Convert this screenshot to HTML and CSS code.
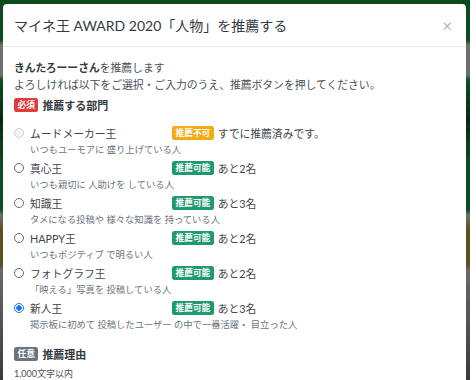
FILE: index.html
```html
<!DOCTYPE html>
<html lang="ja">
<head>
    <meta charset="UTF-8">
    <meta name="viewport" content="width=device-width, initial-scale=1.0">
    <title>マイネ王 AWARD 2020</title>
    <link rel="stylesheet" href="styles.css">
</head>
<body>

<div class="backdrop">
    <!-- モーダル -->
    <div class="modal">
        <div class="modal-header">
            <h5 class="modal-title">マイネ王 AWARD 2020「人物」を推薦する</h5>
            <span class="close">&times;</span>
        </div>

        <div class="modal-body">
            <p class="intro"><strong>きんたろーーさん</strong>を推薦します<br>よろしければ以下をご選択・ご入力のうえ、推薦ボタンを押してください。</p>

            <div class="section-title"><span class="badge badge-red">必須</span>推薦する部門</div>

            <div class="options">
                <div class="option disabled">
                    <label class="option-label"><input type="radio" name="bumon" disabled>ムードメーカー王</label>
                    <div class="option-status"><span class="badge badge-yellow">推薦不可</span>すでに推薦済みです。</div>
                    <div class="option-desc">いつもユーモアに 盛り上げている人</div>
                </div>
                <div class="option">
                    <label class="option-label"><input type="radio" name="bumon">真心王</label>
                    <div class="option-status"><span class="badge badge-green">推薦可能</span>あと2名</div>
                    <div class="option-desc">いつも親切に 人助けを している人</div>
                </div>
                <div class="option">
                    <label class="option-label"><input type="radio" name="bumon">知識王</label>
                    <div class="option-status"><span class="badge badge-green">推薦可能</span>あと3名</div>
                    <div class="option-desc">タメになる投稿や 様々な知識を 持っている人</div>
                </div>
                <div class="option">
                    <label class="option-label"><input type="radio" name="bumon">HAPPY王</label>
                    <div class="option-status"><span class="badge badge-green">推薦可能</span>あと2名</div>
                    <div class="option-desc">いつもポジティブ で明るい人</div>
                </div>
                <div class="option">
                    <label class="option-label"><input type="radio" name="bumon">フォトグラフ王</label>
                    <div class="option-status"><span class="badge badge-green">推薦可能</span>あと2名</div>
                    <div class="option-desc">「映える」写真を 投稿している人</div>
                </div>
                <div class="option">
                    <label class="option-label"><input type="radio" name="bumon" checked>新人王</label>
                    <div class="option-status"><span class="badge badge-green">推薦可能</span>あと3名</div>
                    <div class="option-desc">掲示板に初めて 投稿したユーザー の中で一番活躍・ 目立った人</div>
                </div>
            </div>

            <div class="section-title"><span class="badge badge-gray">任意</span>推薦理由</div>
            <div class="note">1,000文字以内</div>
        </div>
    </div>
</div>

</body>
</html>
```

FILE: styles.css
```css
body {
    margin: 0;
    background: #ffffff;
    font-family: "Lato", "Noto Sans CJK JP", sans-serif;
    color: #495057;
    overflow: hidden;
}
.backdrop {
    width: 470px;
    height: 380px;
    padding: 4px 4px 0 3px;
    box-sizing: border-box;
    background: linear-gradient(#0b4a1c 0, #0b4a1c 40px, #6e6e6e 45px, #6e6e6e 75px, #0d4d1f 80px, #0a2a12 120px, #0d4d1f 165px, #0d4d1f 210px, #707070 215px, #5a5020 230px, #5a5020 265px, #6a6a6a 270px, #3a3a3a 380px);
}
.modal {
    background: #fff;
    height: 100%;
    border-radius: 4px 4px 0 0;
    overflow: hidden;
}
.modal-header {
    display: flex;
    justify-content: space-between;
    align-items: center;
    padding: 12px 12px 11px 11px;
    border-bottom: 1px solid #e6e9ec;
}
.modal-title {
    margin: 0;
    font-size: 14px;
    font-weight: normal;
    line-height: 19px;
    color: #343a40;
}
.close {
    font-size: 17px;
    line-height: 19px;
    color: #b5b5b5;
    margin-right: 2px;
}
.modal-body {
    padding: 12px 11px;
    font-size: 10.8px;
}
.intro {
    margin: 0 0 4px;
    line-height: 17px;
    color: #495057;
}
.intro strong {
    color: #343a40;
}
.section-title {
    display: flex;
    align-items: center;
    height: 16px;
    font-weight: bold;
    font-size: 11px;
    color: #343a40;
}
.badge {
    display: inline-block;
    height: 14px;
    line-height: 14px;
    padding: 0 3.5px;
    border-radius: 2.5px;
    font-size: 8.7px;
    font-weight: bold;
    color: #fff;
    margin-right: 4px;
}
.badge-red { background: #e03a3a; }
.badge-yellow { background: #f2ab12; }
.badge-green { background: #1e9a70; }
.badge-gray { background: #6c757d; }
.options {
    margin: 12px 0 15px;
}
.option {
    display: grid;
    grid-template-columns: 158px 1fr;
    margin-bottom: 4px;
}
.option-label {
    display: flex;
    align-items: center;
    height: 16px;
    color: #3f464d;
}
.option-label input {
    appearance: none;
    width: 10px;
    height: 10px;
    margin: 0 6px 0 0;
    border: 1px solid #6b6b6b;
    border-radius: 50%;
    box-sizing: border-box;
    background: #fff;
}
.option-label input:checked {
    border-color: #1a73e8;
    background: radial-gradient(circle, #1a73e8 0, #1a73e8 2.5px, #fff 3px);
}
.option-label input:disabled {
    border-color: #d2d2d2;
    background: #f4f4f4;
}
.option-status {
    display: flex;
    align-items: center;
    height: 16px;
    color: #3f464d;
}
.option-desc {
    grid-column: 1 / 3;
    padding-left: 16px;
    margin-top: 2px;
    font-size: 9.3px;
    line-height: 13px;
    color: #6c757d;
}
.note {
    margin-top: 5px;
    font-size: 9px;
    line-height: 13px;
    color: #495057;
}
```
